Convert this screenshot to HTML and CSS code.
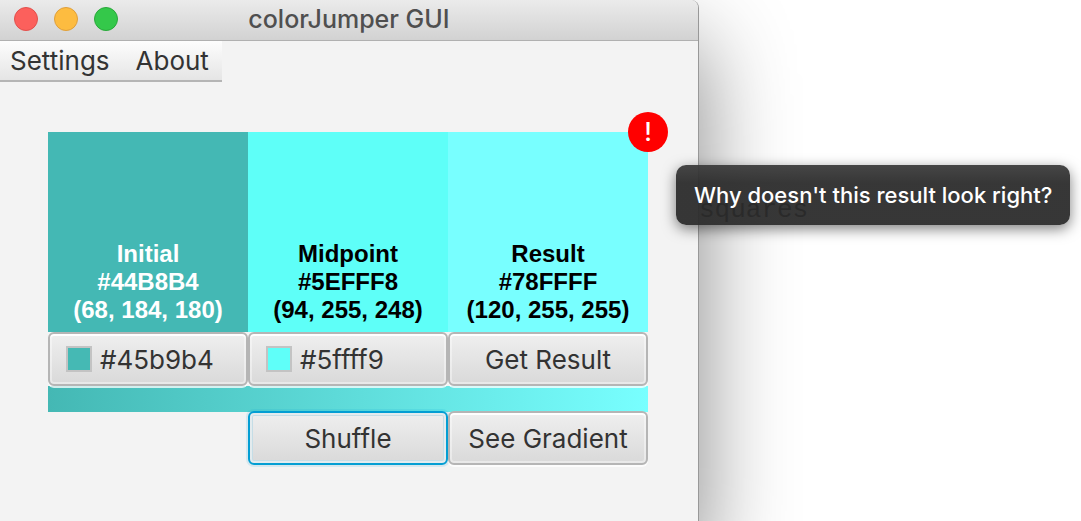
FILE: index.html
```html
<!DOCTYPE html>
<html lang="en">
<head>
<meta charset="utf-8">
<title>colorJumper GUI</title>
<link rel="stylesheet" href="styles.css">
</head>
<body>
<div class="desktop">
  <main class="window">
    <header class="titlebar">
      <div class="lights">
        <button class="light close" aria-label="Close"></button>
        <button class="light minimize" aria-label="Minimize"></button>
        <button class="light zoom" aria-label="Zoom"></button>
      </div>
      <h1 class="title">colorJumper GUI</h1>
    </header>
    <nav class="menubar">
      <button class="menu">Settings</button>
      <button class="menu">About</button>
    </nav>
    <section class="panel">
      <div class="swatch initial"><span>Initial</span><span>#44B8B4</span><span>(68, 184, 180)</span></div>
      <div class="swatch midpoint"><span>Midpoint</span><span>#5EFFF8</span><span>(94, 255, 248)</span></div>
      <div class="swatch result"><span>Result</span><span>#78FFFF</span><span>(120, 255, 255)</span></div>
      <button class="button picker"><i class="chip chip-initial"></i>#45b9b4</button>
      <button class="button picker"><i class="chip chip-midpoint"></i>#5ffff9</button>
      <button class="button">Get Result</button>
      <div class="gradient"></div>
      <button class="button shuffle">Shuffle</button>
      <button class="button">See Gradient</button>
      <button class="warning" aria-describedby="tip">!</button>
      <div class="tooltip" id="tip" role="tooltip">Why doesn't this result look right?</div>
    </section>
  </main>
  <aside class="document">squares</aside>
</div>
</body>
</html>
```
FILE: styles.css
```css
* {
  box-sizing: border-box;
}

body {
  margin: 0;
  background: #fff;
  font-family: Inter, "Liberation Sans", sans-serif;
  font-size: 26px;
  color: #333;
  overflow: hidden;
}

button {
  margin: 0;
  padding: 0;
  border: 0;
  background: none;
  font: inherit;
  color: inherit;
}

.desktop {
  display: flex;
  min-height: 100vh;
}

.window {
  flex: 0 1 699px;
  border-right: 1px solid #989898;
  border-top-right-radius: 8px;
  background: #f3f3f3;
  box-shadow: 0 46px 90px 4px rgba(0, 0, 0, 0.45);
  z-index: 1;
}

.titlebar {
  display: grid;
  grid-template-columns: 1fr auto 1fr;
  align-items: center;
  height: 41px;
  padding: 0 14px 2px;
  border-bottom: 1px solid #b0b0b0;
  border-top-right-radius: 8px;
  background: linear-gradient(#ebebeb, #d2d2d2);
}

.lights {
  display: flex;
  gap: 16px;
}

.light {
  width: 24px;
  height: 24px;
  border: 1px solid;
  border-radius: 50%;
}

.close {
  border-color: #e2504c;
  background: #fc605c;
}

.minimize {
  border-color: #df9f3b;
  background: #fdbc40;
}

.zoom {
  border-color: #29a83a;
  background: #34c84a;
}

.title {
  margin: 0;
  font-size: 25px;
  font-weight: 500;
  color: #4f4f4f;
}

.menubar {
  display: flex;
  gap: 26px;
  width: fit-content;
  height: 41px;
  padding: 0 13px 0 10px;
  border-bottom: 2px solid #b5b5b5;
  background: linear-gradient(#fdfdfd, #e5e5e5);
}

.panel {
  position: relative;
  display: grid;
  grid-template-columns: repeat(3, 1fr);
  margin: 50px 50px 56px 48px;
}

.swatch {
  display: flex;
  flex-direction: column;
  justify-content: flex-end;
  height: 200px;
  padding-bottom: 8px;
  font: bold 24px/28px "Liberation Sans", Arial, sans-serif;
  text-align: center;
  color: #000;
}

.initial {
  background: #44b8b4;
  color: #fff;
}

.midpoint {
  background: #5efff8;
}

.result {
  background: #78ffff;
}

.button {
  position: relative;
  display: flex;
  align-items: center;
  justify-content: center;
  height: 54px;
  border: 2px solid #b5b5b5;
  border-radius: 6px;
  background: linear-gradient(#efefef, #d9d9d9);
  box-shadow: 0 2px rgba(255, 255, 255, 0.75), inset 0 2px #fff, inset 0 0 0 2px rgba(255, 255, 255, 0.4);
}

.picker {
  justify-content: flex-start;
  gap: 8px;
  padding-left: 16px;
}

.chip {
  width: 26px;
  height: 26px;
  border: 2px solid #c3c3c3;
}

.chip-initial {
  background: #45b9b4;
}

.chip-midpoint {
  background: #5ffff9;
}

.gradient {
  grid-column: 1 / -1;
  height: 26px;
  margin-bottom: -1px;
  background: linear-gradient(90deg, #44b8b4, #78ffff);
}

.shuffle {
  grid-column: 2;
  border-color: #039ed3;
  box-shadow: 0 0 0 2px rgba(3, 158, 211, 0.12), inset 0 0 0 2px #e3ebee, inset 0 0 0 3px #c5dde6;
}

.warning {
  position: absolute;
  top: -20px;
  right: -20px;
  width: 40px;
  height: 40px;
  border-radius: 50%;
  background: #f00;
  font-size: 25px;
  font-weight: 500;
  color: #fff;
}

.tooltip {
  position: absolute;
  top: 33px;
  left: calc(100% + 28px);
  padding: 0 18px;
  border-radius: 10px;
  background: linear-gradient(rgba(60, 60, 60, 0.95), rgba(44, 44, 44, 0.95) 30%);
  box-shadow: 0 4px 14px rgba(0, 0, 0, 0.5);
  font-size: 22px;
  font-weight: 500;
  line-height: 60px;
  white-space: nowrap;
  color: #fff;
}

.document {
  padding-top: 194px;
  font: 26px/32px "Liberation Mono", monospace;
  color: #000;
}
```
